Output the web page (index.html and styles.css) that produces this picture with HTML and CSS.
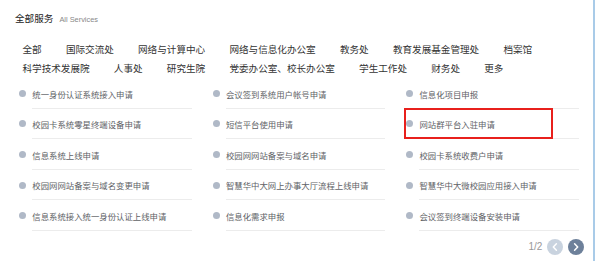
FILE: index.html
```html
<!DOCTYPE html>
<html lang="zh-CN">
<head>
<meta charset="utf-8">
<title>全部服务</title>
<link rel="stylesheet" href="styles.css">
</head>
<body>
<div class="page">
  <div class="header">
    <span class="title">全部服务</span>
    <span class="subtitle">All Services</span>
  </div>
  <div class="cats">
    <span class="cat">全部</span>
    <span class="cat">国际交流处</span>
    <span class="cat">网络与计算中心</span>
    <span class="cat">网络与信息化办公室</span>
    <span class="cat">教务处</span>
    <span class="cat">教育发展基金管理处</span>
    <span class="cat">档案馆</span>
    <span class="cat">科学技术发展院</span>
    <span class="cat">人事处</span>
    <span class="cat">研究生院</span>
    <span class="cat">党委办公室、校长办公室</span>
    <span class="cat">学生工作处</span>
    <span class="cat">财务处</span>
    <span class="cat">更多</span>
  </div>
  <div class="services">
    <div class="item"><i class="dot"></i><span class="txt">统一身份认证系统接入申请</span></div>
    <div class="item"><i class="dot"></i><span class="txt">会议签到系统用户帐号申请</span></div>
    <div class="item"><i class="dot"></i><span class="txt">信息化项目申报</span></div>
    <div class="item"><i class="dot"></i><span class="txt">校园卡系统零星终端设备申请</span></div>
    <div class="item"><i class="dot"></i><span class="txt">短信平台使用申请</span></div>
    <div class="item"><i class="dot"></i><span class="txt">网站群平台入驻申请</span><span class="mark"></span></div>
    <div class="item"><i class="dot"></i><span class="txt">信息系统上线申请</span></div>
    <div class="item"><i class="dot"></i><span class="txt">校园网网站备案与域名申请</span></div>
    <div class="item"><i class="dot"></i><span class="txt">校园卡系统收费户申请</span></div>
    <div class="item"><i class="dot"></i><span class="txt">校园网网站备案与域名变更申请</span></div>
    <div class="item"><i class="dot"></i><span class="txt">智慧华中大网上办事大厅流程上线申请</span></div>
    <div class="item"><i class="dot"></i><span class="txt">智慧华中大微校园应用接入申请</span></div>
    <div class="item"><i class="dot"></i><span class="txt">信息系统接入统一身份认证上线申请</span></div>
    <div class="item"><i class="dot"></i><span class="txt">信息化需求申报</span></div>
    <div class="item"><i class="dot"></i><span class="txt">会议签到终端设备安装申请</span></div>
  </div>
  <div class="pager">
    <span class="count">1/2</span>
    <svg class="btn" width="16" height="16" viewBox="0 0 16 16"><circle cx="8" cy="8" r="8" fill="#c9d3df"/><path d="M9.4 4.8 L6.3 8 L9.4 11.2" fill="none" stroke="#fff" stroke-width="1.5" stroke-linecap="round" stroke-linejoin="round"/></svg>
    <svg class="btn" width="16" height="16" viewBox="0 0 16 16"><circle cx="8" cy="8" r="8" fill="#6d809a"/><path d="M6.6 4.8 L9.7 8 L6.6 11.2" fill="none" stroke="#fff" stroke-width="1.5" stroke-linecap="round" stroke-linejoin="round"/></svg>
  </div>
</div>
</body>
</html>
```

FILE: styles.css
```css
html, body {
  margin: 0;
  padding: 0;
  background: #fff;
}
body {
  font-family: "Noto Sans CJK SC", "Liberation Sans", sans-serif;
}
.page {
  box-sizing: border-box;
  width: 595px;
  height: 261px;
  border-right: 2px solid #a9cbe8;
  overflow: hidden;
}
.header {
  padding: 12px 0 0 15px;
  height: 12px;
  line-height: 12px;
  display: flex;
  align-items: baseline;
}
.title {
  font-size: 9.6px;
  color: #222;
}
.subtitle {
  font-family: "Liberation Sans", sans-serif;
  font-size: 7.4px;
  color: #888;
  margin-left: 6px;
}
.cats {
  margin-top: 16px;
  padding-left: 22.5px;
  display: flex;
  flex-wrap: wrap;
  column-gap: 24.2px;
  width: 560px;
  font-size: 9.6px;
  line-height: 19px;
  color: #333;
}
.cat {
  white-space: nowrap;
}
.services {
  padding-left: 19.3px;
  display: grid;
  grid-template-columns: repeat(3, 193.6px);
  font-size: 8.4px;
  color: #606266;
}
.item {
  position: relative;
  display: flex;
  align-items: center;
}
.dot {
  flex: none;
  width: 7px;
  height: 7px;
  border-radius: 50%;
  background: #b0b9c7;
  margin-right: 6px;
}
.txt {
  width: 159.5px;
  padding: 9.6px 0 8px;
  line-height: 12px;
  border-bottom: 1px solid #ececec;
  white-space: nowrap;
}
.mark {
  position: absolute;
  left: -2px;
  top: -1px;
  width: 149px;
  height: 31.6px;
  box-sizing: border-box;
  border: 2px solid #e8201c;
}
.pager {
  margin-top: 8px;
  padding-right: 8.7px;
  display: flex;
  justify-content: flex-end;
  align-items: center;
  gap: 5px;
  height: 16px;
}
.count {
  font-family: "Liberation Sans", sans-serif;
  font-size: 10px;
  color: #999;
  margin-right: 0;
}
.btn {
  display: block;
}
```
